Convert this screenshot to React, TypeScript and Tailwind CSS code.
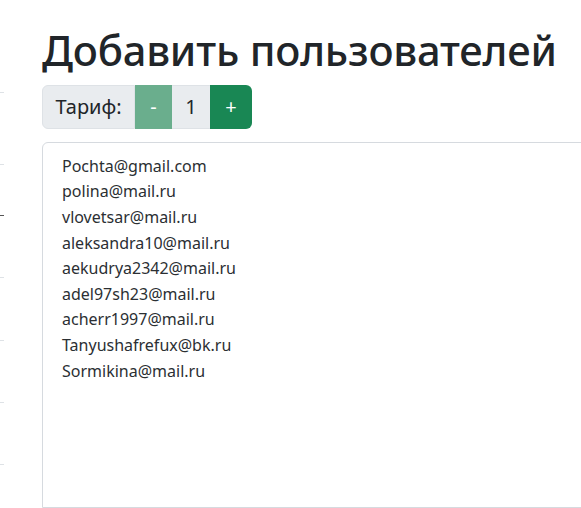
const emails = [
  "Pochta@gmail.com",
  "polina@mail.ru",
  "vlovetsar@mail.ru",
  "aleksandra10@mail.ru",
  "aekudrya2342@mail.ru",
  "adel97sh23@mail.ru",
  "acherr1997@mail.ru",
  "Tanyushafrefux@bk.ru",
  "Sormikina@mail.ru",
];

// row borders of the clipped table on the left
const rows = [
  { h: 93, dark: false },
  { h: 72, dark: false },
  { h: 51, dark: true },
  { h: 62, dark: false },
  { h: 63, dark: false },
  { h: 62, dark: false },
  { h: 62, dark: false },
];

export default function App() {
  return (
    <div className="flex h-[508px] w-[581px] overflow-hidden bg-white font-['Noto_Sans',sans-serif] text-[#212529]">
      <div className="flex w-[42px] shrink-0 flex-col">
        {rows.map((r, i) => (
          <div
            key={i}
            className={
              r.dark
                ? "w-[4px] shrink-0 border-b border-[#555]"
                : "w-[4px] shrink-0 border-b border-[#dee2e6]"
            }
            style={{ height: r.h }}
          />
        ))}
      </div>
      <div className="flex min-w-0 flex-col pt-[25px]">
        <h1 className="whitespace-nowrap text-[41.7px] font-medium leading-[1.2] tracking-[-0.2px]">
          Добавить пользователей
        </h1>
        <div className="mt-[10px] flex h-[48px] w-fit text-[20px]">
          <div className="flex w-[93px] items-center justify-center rounded-l-[6px] border border-[#dee2e6] bg-[#e9ecef]">
            Тариф:
          </div>
          <button className="w-[37px] bg-[#6aae8d] text-white">-</button>
          <div className="flex w-[38px] items-center justify-center border-y border-[#dee2e6] bg-[#e9ecef]">
            1
          </div>
          <button className="w-[42px] rounded-r-[6px] bg-[#198754] text-white">+</button>
        </div>
        <div className="mt-[13px] h-[400px] w-[600px] rounded-tl-[6px] border border-[#d6dadf] px-[19px] pt-[11px] text-[16px] leading-[25.6px] text-[#2b2f33]">
          {emails.map((e) => (
            <div key={e}>{e}</div>
          ))}
        </div>
      </div>
    </div>
  );
}
